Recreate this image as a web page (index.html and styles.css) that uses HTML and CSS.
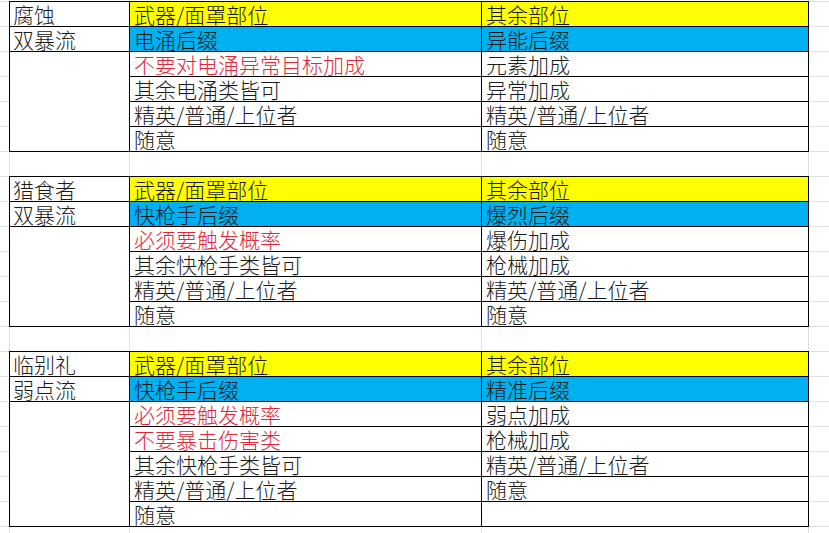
FILE: index.html
```html
<!DOCTYPE html>
<html lang="zh-CN">
<head>
<meta charset="utf-8">
<title>Sheet</title>
<link rel="stylesheet" href="styles.css">
</head>
<body>
<div class="sheet">
  <section class="block">
    <div class="c name">腐蚀</div><div class="c y">武器/面罩部位</div><div class="c y">其余部位</div>
    <div class="c name">双暴流</div><div class="c b">电涌后缀</div><div class="c b">异能后缀</div>
    <div class="c merge4"></div><div class="c red">不要对电涌异常目标加成</div><div class="c">元素加成</div>
    <div class="c">其余电涌类皆可</div><div class="c">异常加成</div>
    <div class="c">精英/普通/上位者</div><div class="c">精英/普通/上位者</div>
    <div class="c">随意</div><div class="c">随意</div>
  </section>
  <section class="block">
    <div class="c name">猎食者</div><div class="c y">武器/面罩部位</div><div class="c y">其余部位</div>
    <div class="c name">双暴流</div><div class="c b">快枪手后缀</div><div class="c b">爆烈后缀</div>
    <div class="c merge4"></div><div class="c red">必须要触发概率</div><div class="c">爆伤加成</div>
    <div class="c">其余快枪手类皆可</div><div class="c">枪械加成</div>
    <div class="c">精英/普通/上位者</div><div class="c">精英/普通/上位者</div>
    <div class="c">随意</div><div class="c">随意</div>
  </section>
  <section class="block">
    <div class="c name">临别礼</div><div class="c y">武器/面罩部位</div><div class="c y">其余部位</div>
    <div class="c name">弱点流</div><div class="c b">快枪手后缀</div><div class="c b">精准后缀</div>
    <div class="c merge5"></div><div class="c red">必须要触发概率</div><div class="c">弱点加成</div>
    <div class="c red">不要暴击伤害类</div><div class="c">枪械加成</div>
    <div class="c">其余快枪手类皆可</div><div class="c">精英/普通/上位者</div>
    <div class="c">精英/普通/上位者</div><div class="c">随意</div>
    <div class="c">随意</div><div class="c"></div>
  </section>
</div>
</body>
</html>
```
FILE: styles.css
```css
html, body {
  margin: 0;
  padding: 0;
}
body {
  min-height: 100vh;
  background-color: #fff;
  background-image:
    linear-gradient(#e1e1e1, #e1e1e1),
    linear-gradient(#e1e1e1, #e1e1e1),
    linear-gradient(#e1e1e1, #e1e1e1),
    linear-gradient(#e1e1e1, #e1e1e1),
    linear-gradient(to bottom, #e1e1e1 0 1px, transparent 1px 25px);
  background-size: 1px 100%, 1px 100%, 1px 100%, 1px 100%, 100% 25px;
  background-position: 9px 0, 129px 0, 481px 0, 808px 0, 0 1px;
  background-repeat: no-repeat, no-repeat, no-repeat, no-repeat, repeat;
  font-family: "Noto Sans CJK SC", "Noto Sans", sans-serif;
  font-size: 21px;
  font-weight: 300;
  color: #1b1b1b;
}
.sheet {
  padding: 1px 0 0 9px;
  display: flex;
  flex-direction: column;
  gap: 24px;
}
.block {
  display: grid;
  grid-template-columns: 120px 352px 327px;
  grid-auto-rows: 25px;
  width: 800px;
  box-sizing: border-box;
  border-left: 1px solid #000;
  border-top: 1px solid #000;
}
.c {
  box-sizing: border-box;
  border-right: 1px solid #000;
  border-bottom: 1px solid #000;
  background: #fff;
  padding-left: 4px;
  line-height: 24px;
  white-space: nowrap;
}
.name {
  padding-left: 3px;
}
.merge4 {
  grid-row: span 4;
}
.merge5 {
  grid-row: span 5;
}
.y {
  background: #ffff00;
}
.b {
  background: #00b0f0;
}
.red {
  color: #e0283a;
}
```
